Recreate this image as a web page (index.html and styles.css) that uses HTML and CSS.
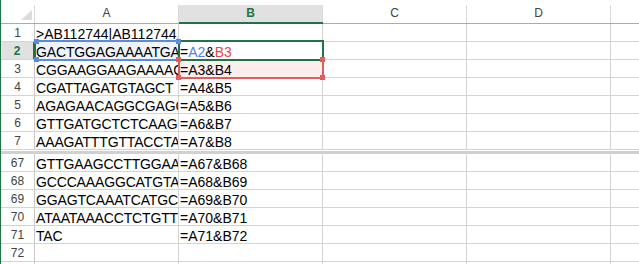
FILE: index.html
```html
<!DOCTYPE html>
<html>
<head>
<meta charset="utf-8">
<link rel="stylesheet" href="styles.css">
</head>
<body>
<div class="sheet">
  <div class="row head">
    <div class="ch corner"><span class="lbl"><svg class="tri" width="33" height="18" viewBox="0 0 33 18"><polygon points="31,5 31,15 20,15" fill="#dcdcdc"/></svg></span></div>
    <div class="ch"><span class="lbl">A</span></div>
    <div class="ch sel"><span class="lbl">B</span></div>
    <div class="ch"><span class="lbl">C</span></div>
    <div class="ch"><span class="lbl">D</span></div>
    <div class="ch last"><span class="lbl"></span></div>
  </div>

  <div class="row"><div class="rh">1</div><div class="c">&gt;AB112744|AB112744.1 Crassostrea</div><div class="c"></div><div class="c"></div><div class="c"></div><div class="c end"></div></div>
  <div class="row"><div class="rh sel">2</div><div class="c seq refa">GACTGGAGAAAATGATCCAG</div><div class="c">=<span class="blue">A2</span>&amp;<span class="red">B3</span></div><div class="c"></div><div class="c"></div><div class="c end"></div></div>
  <div class="row"><div class="rh">3</div><div class="c seq">CGGAAGGAAGAAAACTGGAT</div><div class="c refb">=A3&amp;B4</div><div class="c"></div><div class="c"></div><div class="c end"></div></div>
  <div class="row"><div class="rh">4</div><div class="c seq">CGATTAGATGTAGCT</div><div class="c">=A4&amp;B5</div><div class="c"></div><div class="c"></div><div class="c end"></div></div>
  <div class="row"><div class="rh">5</div><div class="c seq">AGAGAACAGGCGAGCTTGAC</div><div class="c">=A5&amp;B6</div><div class="c"></div><div class="c"></div><div class="c end"></div></div>
  <div class="row"><div class="rh">6</div><div class="c seq">GTTGATGCTCTCAAGGATTC</div><div class="c">=A6&amp;B7</div><div class="c"></div><div class="c"></div><div class="c end"></div></div>
  <div class="row"><div class="rh">7</div><div class="c seq">AAAGATTTGTTACCTATGCA</div><div class="c">=A7&amp;B8</div><div class="c"></div><div class="c"></div><div class="c end"></div></div>

  <div class="freeze"></div>

  <div class="row"><div class="rh">67</div><div class="c seq">GTTGAAGCCTTGGAAGCTCA</div><div class="c">=A67&amp;B68</div><div class="c"></div><div class="c"></div><div class="c end"></div></div>
  <div class="row"><div class="rh">68</div><div class="c seq">GCCCAAAGGCATGTATGCAA</div><div class="c">=A68&amp;B69</div><div class="c"></div><div class="c"></div><div class="c end"></div></div>
  <div class="row"><div class="rh">69</div><div class="c seq">GGAGTCAAATCATGCTTCAG</div><div class="c">=A69&amp;B70</div><div class="c"></div><div class="c"></div><div class="c end"></div></div>
  <div class="row"><div class="rh">70</div><div class="c seq">ATAATAAACCTCTGTTTGAC</div><div class="c">=A70&amp;B71</div><div class="c"></div><div class="c"></div><div class="c end"></div></div>
  <div class="row"><div class="rh">71</div><div class="c seq">TAC</div><div class="c">=A71&amp;B72</div><div class="c"></div><div class="c"></div><div class="c end"></div></div>
  <div class="row"><div class="rh">72</div><div class="c seq"></div><div class="c"></div><div class="c"></div><div class="c"></div><div class="c end"></div></div>
  <div class="row"><div class="rh">73</div><div class="c seq"></div><div class="c"></div><div class="c"></div><div class="c"></div><div class="c end"></div></div>

  <div class="box box-blue"></div>
  <div class="box box-green"></div>
  <div class="box box-red"></div>
  <div class="hd hd-blue hb-tl"></div>
  <div class="hd hd-blue hb-bl"></div>
  <div class="hd hd-blue hb-tr"></div>
  <div class="hd hd-red hr-tl"></div>
  <div class="hd hd-red hr-tr"></div>
  <div class="hd hd-red hr-bl"></div>
  <div class="hd hd-red hr-br"></div>
</div>
</body>
</html>
```
FILE: styles.css
```css
html, body {
  margin: 0;
  padding: 0;
  background: #fff;
  overflow: hidden;
}
body {
  font-family: "Liberation Sans", Arial, sans-serif;
  width: 639px;
  height: 264px;
}
.sheet {
  position: relative;
  border-left: 1px solid #217346;
  height: 264px;
  overflow: hidden;
}
.row {
  display: grid;
  grid-template-columns: 34px 144px 144px 144px 144px 1fr;
  height: 18px;
}
.row.head {
  height: 24px;
}
.ch {
  box-sizing: border-box;
  height: 24px;
  padding-top: 5px;
  border-bottom: 1px solid #ababab;
}
.ch .lbl {
  display: block;
  box-sizing: border-box;
  height: 18px;
  border-right: 1px solid #d9d9d9;
  text-align: center;
  font-size: 12px;
  line-height: 16px;
  color: #444;
}
.ch.sel {
  border-bottom: 2px solid #217346;
}
.ch.sel .lbl {
  height: 17px;
  background: #e1e1e1;
  color: #217346;
  font-weight: bold;
}
.ch.last .lbl {
  border-right: none;
}
.tri {
  display: block;
}
.rh {
  box-sizing: border-box;
  height: 18px;
  border-right: 1px solid #c8c8c8;
  border-bottom: 1px solid #d4d4d4;
  text-align: center;
  font-size: 12px;
  line-height: 15px;
  padding-top: 2px;
  color: #444;
}
.rh.sel {
  background: #e1e1e1;
  color: #217346;
  font-weight: bold;
  border-right: 2px solid #217346;
}
.c {
  box-sizing: border-box;
  height: 18px;
  border-right: 1px solid #d4d4d4;
  border-bottom: 1px solid #d4d4d4;
  padding: 3px 1px 0 1px;
  font-size: 14px;
  line-height: 14px;
  white-space: nowrap;
  overflow: hidden;
  color: #000;
}
.c.end {
  border-right: none;
}
.c.seq {
  letter-spacing: -0.15px;
}
.c.refa {
  background: #eef3fc;
}
.c.refb {
  background: #fdeeee;
}
.blue {
  color: #4a82e6;
}
.red {
  color: #e5484d;
}
.freeze {
  height: 4px;
  background: linear-gradient(#fff 1px, #d0d0d0 1px);
}
.box {
  position: absolute;
  box-sizing: border-box;
  border-style: solid;
  border-width: 2px;
}
.box-blue {
  left: 33px;
  top: 40px;
  width: 146px;
  height: 21px;
  border-color: #5a8ae6;
  border-left-color: #217346;
}
.box-green {
  left: 177px;
  top: 40px;
  width: 146px;
  height: 21px;
  border-color: #217346;
}
.box-red {
  left: 177px;
  top: 59px;
  width: 146px;
  height: 20px;
  border-color: #e55c5c;
  border-top-color: transparent;
}
.hd {
  position: absolute;
  width: 5px;
  height: 5px;
}
.hd-blue { background: #5a8ae6; }
.hd-red { background: #e55c5c; }
.hb-tl { left: 33px; top: 39px; }
.hb-bl { left: 33px; top: 57px; }
.hb-tr { left: 175px; top: 39px; }
.hr-tl { left: 175px; top: 57px; }
.hr-tr { left: 319px; top: 57px; }
.hr-bl { left: 175px; top: 75px; }
.hr-br { left: 319px; top: 75px; }
```
